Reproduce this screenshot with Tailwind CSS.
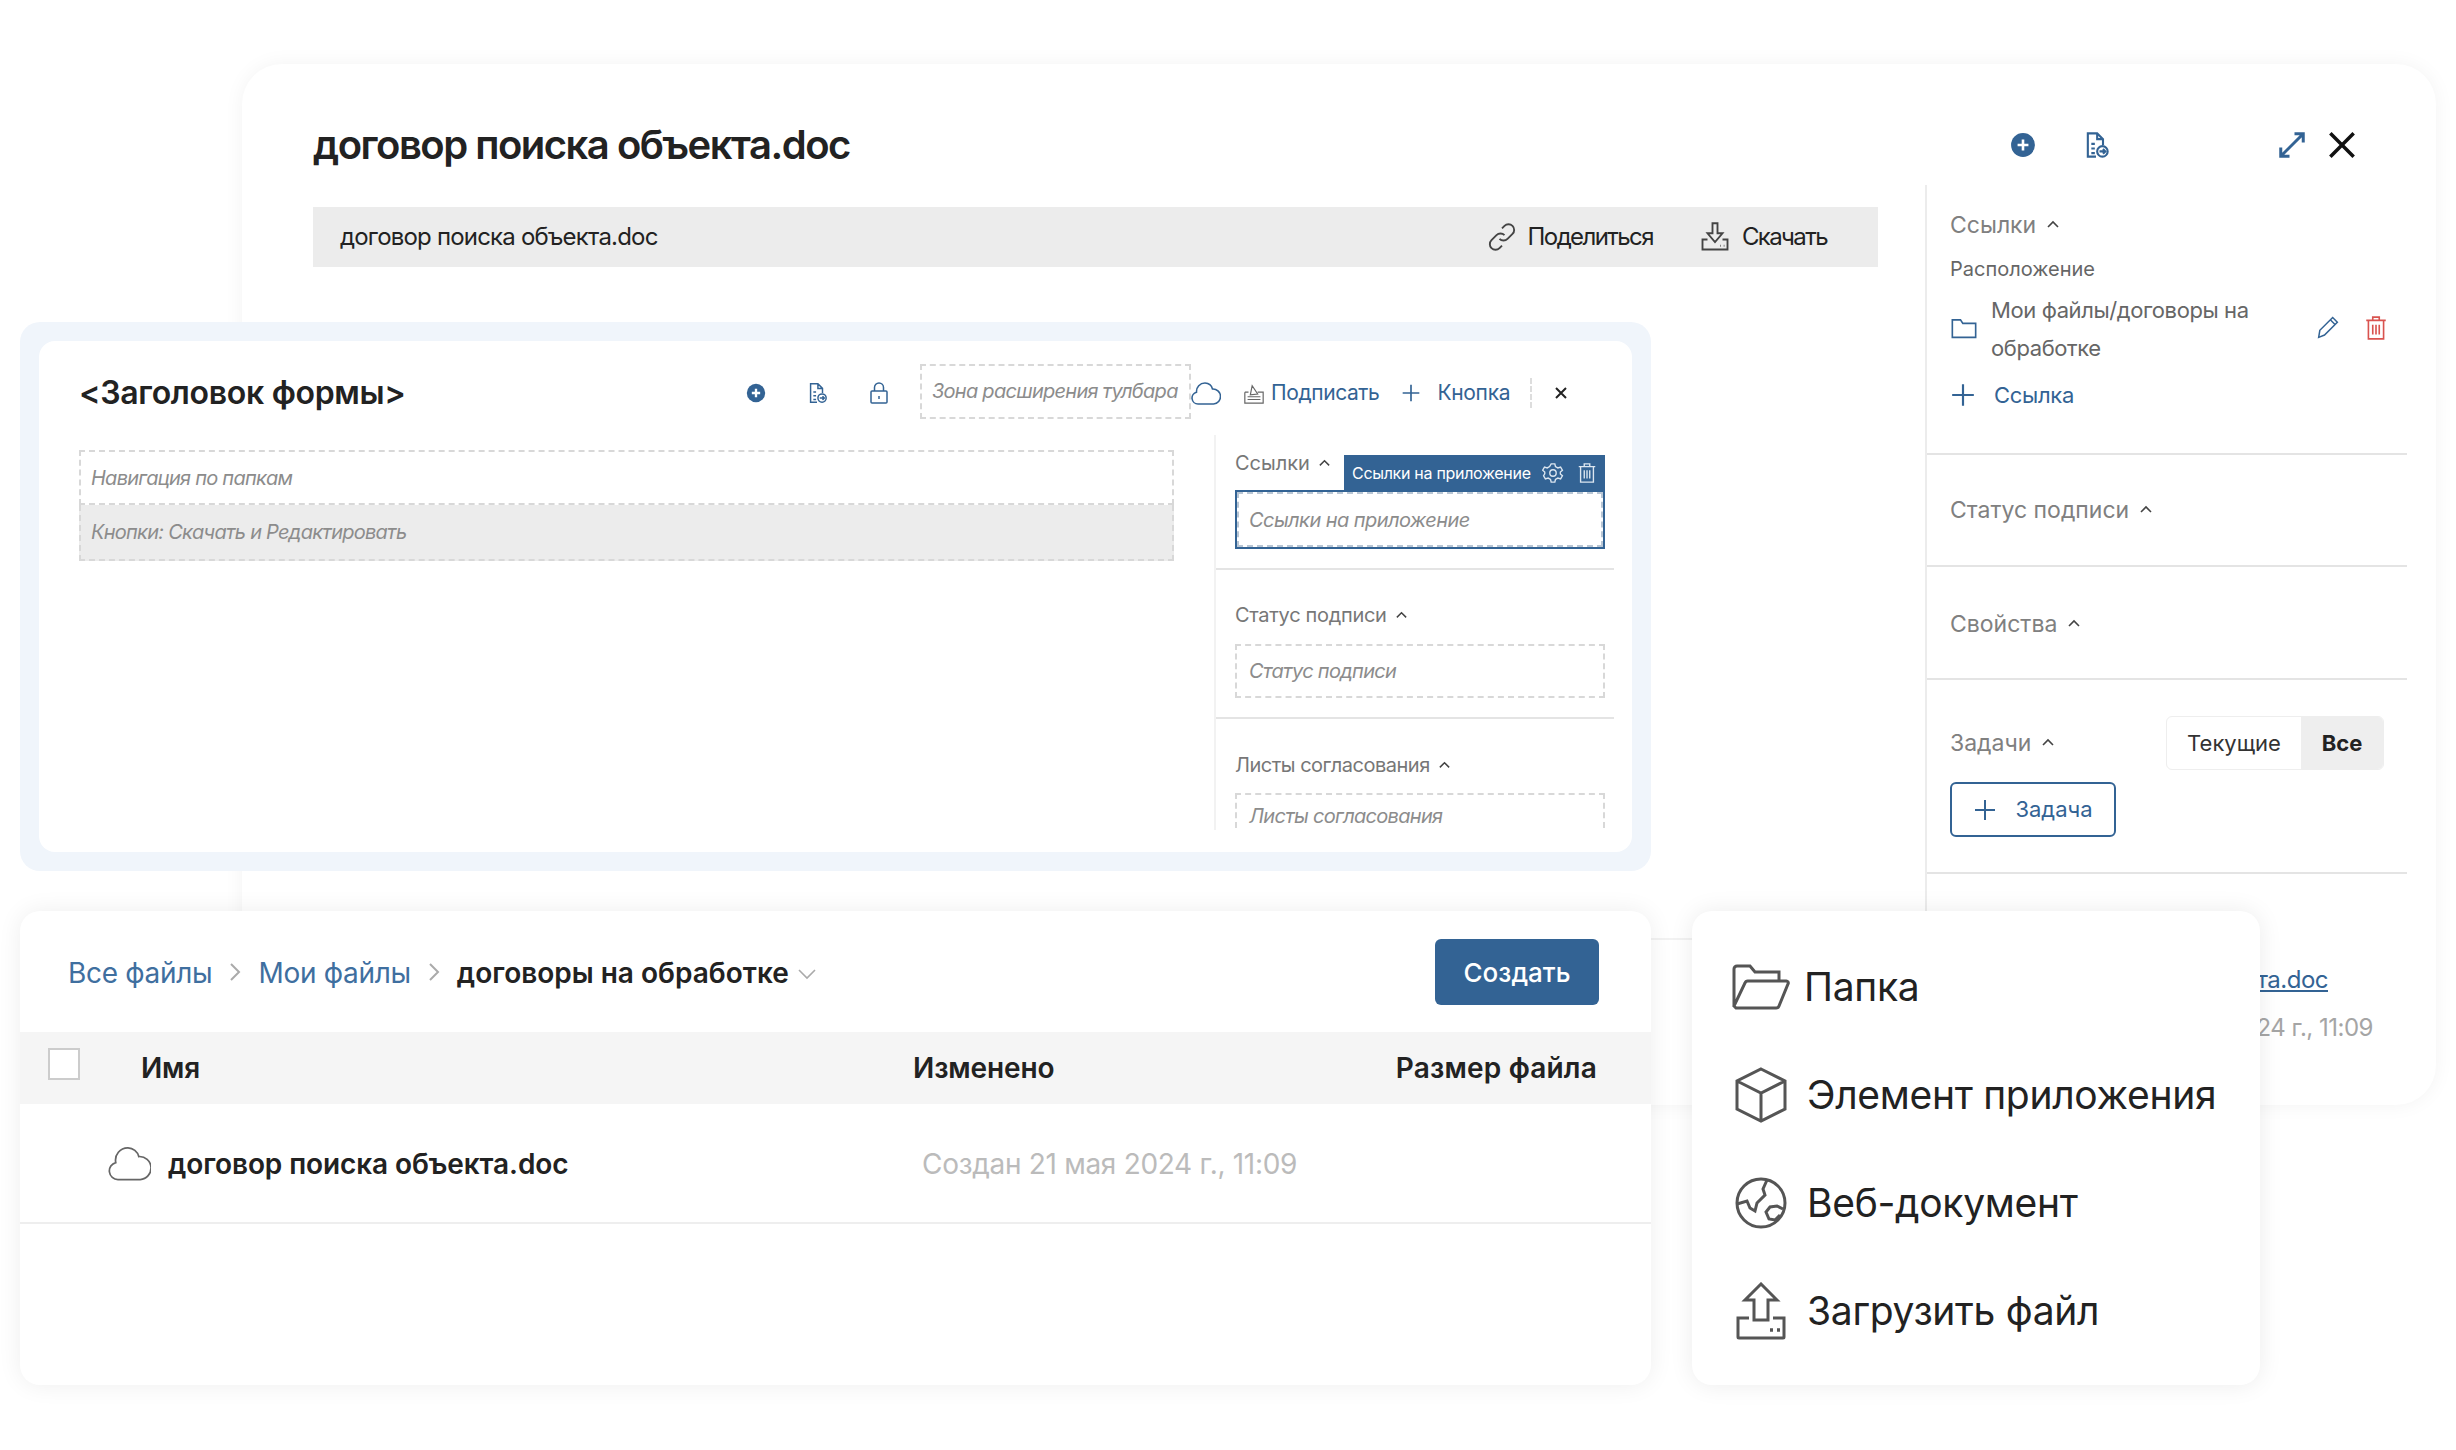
<!DOCTYPE html>
<html lang="ru">
<head>
    <meta charset="UTF-8">
    <meta name="viewport" content="width=device-width, initial-scale=1.0">
    <script src="https://cdn.jsdelivr.net/npm/@tailwindcss/browser@4"></script>
    <title>Файлы</title>
</head>
<body class="bg-white font-['Inter','Noto_Sans',sans-serif] text-[#222]">
<div class="relative w-[2456px] h-[1450px] overflow-hidden">

    <!-- задняя карточка: файл -->
    <section class="absolute left-[242px] top-[64px] w-[2194px] h-[1041px] bg-white rounded-[40px] shadow-[0_0_20px_rgba(0,0,0,0.05)] flex flex-col">
        <header class="h-[121px] shrink-0 flex items-center pt-[40px] pl-[71px]">
            <h1 class="text-[40px] font-semibold tracking-[-1.5px] w-[1680px]">договор поиска объекта.doc</h1>
            <svg class="w-[26px] h-[26px] ml-[17px]" viewBox="0 0 24 24"><circle cx="12" cy="12" r="11" fill="#336394"/><path d="M12 7v10M7 12h10" stroke="#fff" stroke-width="2.4"/></svg>
            <svg class="w-[28px] h-[28px] ml-[46px] text-[#336394]" viewBox="0 0 24 24" fill="none" stroke="currentColor" stroke-width="1.8"><path d="M12 22H5V2h8l5 5v5M13 2v5h5M8 11h3M8 15h3M8 19h3"/><circle cx="17.5" cy="17.5" r="4.5"/><path d="M15 17.5h5M18 15.5l2 2-2 2"/></svg>
            <svg class="w-[30px] h-[30px] ml-[167px] text-[#336394]" viewBox="0 0 24 24" fill="none" stroke="currentColor" stroke-width="2.4"><path d="M3 21 21 3M14 3h7v7M3 14v7h7"/></svg>
            <svg class="w-[28px] h-[28px] ml-[21px]" viewBox="0 0 24 24" fill="none" stroke="#111" stroke-width="3"><path d="M2 2l20 20M22 2 2 22"/></svg>
        </header>
        <div class="flex-1 flex min-h-0">
            <div class="w-[1683px] shrink-0 pl-[71px] pt-[22px] pr-[47px] h-[755px] border-b-2 border-[#f2f2f2]">
                <div class="h-[60px] bg-[#ececec] flex items-center justify-between pl-[27px] pr-[51px] text-[24px] tracking-[-0.8px]">
                    <span>договор поиска объекта.doc</span>
                    <div class="flex items-center gap-[47px] tracking-[-1.6px]">
                        <span class="flex items-center gap-[11px]">
                            <svg class="w-[30px] h-[30px] text-[#444]" viewBox="0 0 24 24" fill="none" stroke="currentColor" stroke-width="1.5"><path d="M10 13.500a4.500 4.500 0 0 0 6.400 0l4-4a4.500 4.500 0 0 0-6.400-6.400l-2 2"/><path d="M14 10.500a4.500 4.500 0 0 0-6.400 0l-4 4a4.500 4.500 0 0 0 6.400 6.400l2-2"/></svg>
                            Поделиться
                        </span>
                        <span class="flex items-center gap-[12px]">
                            <svg class="w-[30px] h-[30px] text-[#444]" viewBox="0 0 24 24" fill="none" stroke="currentColor" stroke-width="1.5"><path d="M10 1h4v8h4l-6 7-6-7h4zM6 14H2v8h20v-8h-4M16 19h.5M19 19h.5"/></svg>
                            Скачать
                        </span>
                    </div>
                </div>
            </div>
            <aside class="w-[482px] shrink-0 border-l-2 border-[#ececec] h-[850px]">
                <div class="h-[270px] border-b-2 border-[#e4e4e4] pl-[23px] pr-[16px] pt-[24px]">
                    <div class="flex items-center gap-[10px] text-[23px] text-[#808080] leading-[32px]">Ссылки
                        <svg class="w-[14px] h-[14px]" viewBox="0 0 14 14" fill="none" stroke="#444" stroke-width="1.6"><path d="M2 9l5-5 5 5"/></svg>
                    </div>
                    <div class="text-[20px] text-[#666] leading-[28px] mt-[14px]">Расположение</div>
                    <div class="flex items-center mt-[8px] text-[#666] text-[22px] leading-[38px] tracking-[-0.4px]">
                        <svg class="w-[28px] h-[28px] shrink-0 mr-[13px] -mt-[2px] text-[#336394]" viewBox="0 0 24 24" fill="none" stroke="currentColor" stroke-width="1.4"><path d="M2 5h7l2 3h11v12H2z"/></svg>
                        <span class="w-[300px] shrink-0">Мои файлы/договоры на обработке</span>
                        <svg class="w-[28px] h-[28px] ml-[23px] -mt-[2px] text-[#336394]" viewBox="0 0 24 24" fill="none" stroke="currentColor" stroke-width="1.3"><path d="M4 20l1-6L16 3l4 4L9 18z"/><path d="M14 5l4 4"/></svg>
                        <svg class="w-[26px] h-[26px] ml-[21px] -mt-[2px] text-[#d9534f]" viewBox="0 0 24 24" fill="none" stroke="currentColor" stroke-width="1.5"><path d="M3 5h18M9 5V2h6v3M5 5v17h14V5M9 9v9M12 9v9M15 9v9"/></svg>
                    </div>
                    <div class="flex items-center gap-[18px] mt-[12px] text-[22px] text-[#336394] leading-[32px] tracking-[-0.3px]">
                        <svg class="w-[26px] h-[26px]" viewBox="0 0 24 24" fill="none" stroke="currentColor" stroke-width="2"><path d="M12 2v20M2 12h20"/></svg>
                        Ссылка
                    </div>
                </div>
                <div class="h-[112px] border-b-2 border-[#e4e4e4] pl-[23px] pt-[39px]">
                    <div class="flex items-center gap-[10px] text-[23px] text-[#808080] leading-[32px]">Статус подписи
                        <svg class="w-[14px] h-[14px]" viewBox="0 0 14 14" fill="none" stroke="#444" stroke-width="1.6"><path d="M2 9l5-5 5 5"/></svg>
                    </div>
                </div>
                <div class="h-[113px] border-b-2 border-[#e4e4e4] pl-[23px] pt-[41px]">
                    <div class="flex items-center gap-[10px] text-[23px] text-[#808080] leading-[32px]">Свойства
                        <svg class="w-[14px] h-[14px]" viewBox="0 0 14 14" fill="none" stroke="#444" stroke-width="1.6"><path d="M2 9l5-5 5 5"/></svg>
                    </div>
                </div>
                <div class="h-[194px] border-b-2 border-[#e4e4e4] pl-[23px] pr-[23px] pt-[36px]">
                    <div class="flex items-center justify-between">
                        <div class="flex items-center gap-[10px] text-[23px] text-[#808080] leading-[32px]">Задачи
                            <svg class="w-[14px] h-[14px]" viewBox="0 0 14 14" fill="none" stroke="#444" stroke-width="1.6"><path d="M2 9l5-5 5 5"/></svg>
                        </div>
                        <div class="flex w-[218px] h-[54px] rounded-[6px] border border-[#eeeeee] text-[22px] text-[#333] overflow-hidden">
                            <span class="w-[134px] flex items-center justify-center">Текущие</span>
                            <span class="flex-1 flex items-center justify-center bg-[#eeeeee] font-bold text-[#222]">Все</span>
                        </div>
                    </div>
                    <button class="flex items-center justify-center gap-[18px] w-[166px] h-[55px] mt-[12px] rounded-[6px] border-2 border-[#336394] text-[22px] text-[#336394]">
                        <svg class="w-[24px] h-[24px]" viewBox="0 0 24 24" fill="none" stroke="currentColor" stroke-width="2"><path d="M12 2v20M2 12h20"/></svg>
                        Задача
                    </button>
                </div>
                <div class="pt-[82px] text-right text-[24px] leading-[48px] tracking-[-0.5px]">
                    <a class="block mr-[79px] text-[#336394] underline">договор поиска объекта.doc</a>
                    <div class="mr-[34px] text-[#a5a5a5]">Создан 21 мая 2024 г., 11:09</div>
                </div>
            </aside>
        </div>
    </section>

    <!-- форма -->
    <section class="absolute left-[20px] top-[322px] w-[1631px] h-[549px] rounded-[20px] bg-[#f0f5fb] p-[19px]">
        <div class="h-full rounded-[16px] bg-white pl-[40px] pr-[18px] flex flex-col">
            <div class="h-[100px] shrink-0 flex items-center pt-[4px]">
                <h2 class="text-[32px] font-semibold tracking-[-0.3px] w-[667px] shrink-0">&lt;Заголовок формы&gt;</h2>
                <svg class="w-[20px] h-[20px]" viewBox="0 0 24 24"><circle cx="12" cy="12" r="11" fill="#336394"/><path d="M12 7v10M7 12h10" stroke="#fff" stroke-width="2.800"/></svg>
                <svg class="w-[22px] h-[22px] ml-[40px] text-[#336394]" viewBox="0 0 24 24" fill="none" stroke="currentColor" stroke-width="1.6"><path d="M12 22H5V2h8l5 5v5M13 2v5h5M8 11h3M8 15h3M8 19h3"/><circle cx="17.5" cy="17.5" r="4.5"/><path d="M15 17.5h5M18 15.5l2 2-2 2"/></svg>
                <svg class="w-[24px] h-[24px] ml-[39px] text-[#336394]" viewBox="0 0 24 24" fill="none" stroke="currentColor" stroke-width="1.5"><rect x="4" y="10" width="16" height="12" rx="1"/><path d="M7.500 10V6.500a4.500 4.500 0 0 1 9 0V10M12 15v3"/></svg>
                <div class="w-[271px] h-[55px] ml-[29px] -mt-[4px] shrink-0 border-2 border-dashed border-[#d8d8d8] flex items-center pl-[10px] text-[20px] italic tracking-[-0.75px] text-[#8c8c8c] whitespace-nowrap">Зона расширения тулбара</div>
                <svg class="w-[32px] h-[28px] -ml-[2px] shrink-0 text-[#336394]" viewBox="0 0 32 26" fill="none" stroke="currentColor" stroke-width="1.600"><path d="M9 24a6 6 0 0 1-1.500-11.800A8.500 8.500 0 0 1 16 3a8 8 0 0 1 7.500 6 7.500 7.500 0 0 1 1 15z"/></svg>
                <svg class="w-[22px] h-[22px] ml-[22px] mt-[2px] shrink-0 text-[#666]" viewBox="0 0 24 24" fill="none" stroke="currentColor" stroke-width="1.3"><path d="M2 10h4M16 10h6v12H2V10M5 15h14M5 18h14M8 13 10 3l6 9z"/></svg>
                <span class="ml-[6px] text-[21px] text-[#336394] tracking-[-0.4px] whitespace-nowrap">Подписать</span>
                <svg class="w-[20px] h-[20px] ml-[22px] shrink-0 text-[#336394]" viewBox="0 0 24 24" fill="none" stroke="currentColor" stroke-width="2"><path d="M12 2v20M2 12h20"/></svg>
                <span class="ml-[16px] text-[21px] text-[#336394] tracking-[-0.3px]">Кнопка</span>
                <span class="ml-[20px] h-[30px] border-l-2 border-dashed border-[#dddddd]"></span>
                <svg class="w-[14px] h-[14px] ml-[22px] shrink-0" viewBox="0 0 14 14" fill="none" stroke="#222" stroke-width="2"><path d="M2 2l10 10M12 2 2 12"/></svg>
            </div>
            <div class="flex-1 flex min-h-0">
                <div class="w-[1095px] shrink-0 pt-[9px] text-[20px] italic tracking-[-0.75px] text-[#8c8c8c]">
                    <div class="h-[55px] border-2 border-dashed border-[#d8d8d8] flex items-center pl-[10px]">Навигация по папкам</div>
                    <div class="h-[56px] border-2 border-dashed border-[#d8d8d8] border-t-0 bg-[#ececec] flex items-center pl-[10px]">Кнопки: Скачать и Редактировать</div>
                </div>
                <aside class="ml-[40px] -mt-[6px] flex-1 border-l-2 border-[#f2f2f2] h-[395px] overflow-hidden">
                    <div class="h-[135px] border-b-2 border-[#e4e4e4] pl-[19px] pr-[9px] pt-[20px]">
                        <div class="flex items-start">
                            <div class="flex items-center gap-[8px] -mt-[6px] text-[20px] text-[#777] leading-[28px] w-[109px] shrink-0">Ссылки
                                <svg class="w-[13px] h-[13px]" viewBox="0 0 14 14" fill="none" stroke="#444" stroke-width="1.6"><path d="M2 9l5-5 5 5"/></svg>
                            </div>
                            <div class="flex-1 h-[35px] bg-[#336394] flex items-center text-white text-[16px] tracking-[-0.3px] pl-[8px] pr-[7px]">
                                <span class="flex-1 whitespace-nowrap">Ссылки на приложение</span>
                                <svg class="w-[22px] h-[22px] text-[#dce6f0]" viewBox="0 0 24 24" fill="none" stroke="currentColor" stroke-width="1.500"><circle cx="12" cy="12" r="3.500"/><path d="M10 2h4l.7 3 2.600 1.500 3-1 2 3.500-2.300 2v2l2.300 2-2 3.500-3-1-2.600 1.500-.7 3h-4l-.7-3-2.600-1.500-3 1-2-3.500L3 13v-2L.7 9l2-3.500 3 1L8.300 5z"/></svg>
                                <svg class="w-[22px] h-[22px] ml-[12px] text-[#dce6f0]" viewBox="0 0 24 24" fill="none" stroke="currentColor" stroke-width="1.500"><path d="M3 5h18M9 5V2h6v3M5 5v17h14V5M9 9v9M12 9v9M15 9v9"/></svg>
                            </div>
                        </div>
                        <div class="h-[59px] relative border-2 border-[#336394] outline-2 outline-dashed -outline-offset-4 outline-[#b9c6d4] bg-white flex items-center pl-[12px] text-[20px] italic tracking-[-0.55px] text-[#8c8c8c]">Ссылки на приложение</div>
                    </div>
                    <div class="h-[149px] border-b-2 border-[#e4e4e4] pl-[19px] pr-[9px] pt-[31px]">
                        <div class="flex items-center gap-[8px] text-[20px] tracking-[-0.3px] text-[#777] leading-[28px]">Статус подписи
                            <svg class="w-[13px] h-[13px]" viewBox="0 0 14 14" fill="none" stroke="#444" stroke-width="1.6"><path d="M2 9l5-5 5 5"/></svg>
                        </div>
                        <div class="h-[54px] mt-[15px] border-2 border-dashed border-[#d8d8d8] flex items-center pl-[12px] text-[20px] italic tracking-[-0.7px] text-[#8c8c8c]">Статус подписи</div>
                    </div>
                    <div class="pl-[19px] pr-[9px] pt-[32px]">
                        <div class="flex items-center gap-[8px] text-[20px] tracking-[-0.5px] text-[#777] leading-[28px]">Листы согласования
                            <svg class="w-[13px] h-[13px]" viewBox="0 0 14 14" fill="none" stroke="#444" stroke-width="1.6"><path d="M2 9l5-5 5 5"/></svg>
                        </div>
                        <div class="h-[35px] mt-[14px] border-2 border-b-0 border-dashed border-[#d8d8d8] pt-[10px] pl-[12px] text-[20px] leading-[23px] italic tracking-[-0.7px] text-[#8c8c8c]">Листы согласования</div>
                    </div>
                </aside>
            </div>
        </div>
    </section>

    <!-- список файлов -->
    <section class="absolute left-[20px] top-[911px] w-[1631px] h-[474px] rounded-[20px] bg-white shadow-[0_0_24px_rgba(0,0,0,0.07)] overflow-hidden">
        <div class="h-[121px] flex items-center pl-[48px] pr-[52px] text-[28px] tracking-[-0.3px]">
            <a class="text-[#3f6f9f] mt-[2px]">Все файлы</a>
            <svg class="w-[16px] h-[22px] mx-[15px]" viewBox="0 0 16 22" fill="none" stroke="#aaa" stroke-width="2"><path d="M4 3l8 8-8 8"/></svg>
            <a class="text-[#3f6f9f] mt-[2px]">Мои файлы</a>
            <svg class="w-[16px] h-[22px] mx-[15px]" viewBox="0 0 16 22" fill="none" stroke="#aaa" stroke-width="2"><path d="M4 3l8 8-8 8"/></svg>
            <b class="font-semibold tracking-normal mt-[2px]">договоры на обработке</b>
            <svg class="w-[20px] h-[14px] ml-[8px] mt-[4px]" viewBox="0 0 20 14" fill="none" stroke="#aaa" stroke-width="1.6"><path d="M2 3l8 8 8-8"/></svg>
            <button class="ml-auto w-[164px] h-[66px] pt-[2px] rounded-[6px] bg-[#336394] text-white text-[26px] font-medium tracking-normal">Создать</button>
        </div>
        <div class="h-[72px] bg-[#f5f5f5] flex items-center relative text-[28px] font-semibold">
            <span class="w-[32px] h-[32px] ml-[28px] -mt-[8px] bg-white border-2 border-[#cccccc]"></span>
            <span class="ml-[61px] w-[772px] shrink-0 tracking-[-0.2px]">Имя</span>
            <span class="tracking-[-0.1px]">Изменено</span>
            <span class="ml-auto mr-[54px] tracking-[0.2px]">Размер файла</span>
        </div>
        <div class="h-[120px] flex items-center border-b-2 border-[#eeeeee]">
            <svg class="w-[46px] h-[36px] ml-[85px] text-[#666]" viewBox="0 0 32 25" fill="none" stroke="currentColor" stroke-width="1.200"><path d="M9 24a6 6 0 0 1-1.500-11.800A8.500 8.500 0 0 1 16 2a8 8 0 0 1 7.500 6 7.500 7.500 0 0 1 1 16z"/></svg>
            <span class="ml-[17px] w-[754px] shrink-0 mt-[2px] text-[28px] font-semibold tracking-[-0.1px]">договор поиска объекта.doc</span>
            <span class="mt-[2px] text-[28px] text-[#bbbbbb] tracking-[-0.3px]">Создан 21 мая 2024 г., 11:09</span>
        </div>
    </section>

    <!-- меню Создать -->
    <section class="absolute left-[1692px] top-[911px] w-[568px] h-[474px] rounded-[20px] bg-white shadow-[0_0_24px_rgba(0,0,0,0.08)] pl-[40px] pt-[22px] text-[39px] tracking-[-0.3px] text-[#222]">
        <div class="h-[108px] flex items-center gap-[14px]">
            <svg class="w-[58px] h-[46px] text-[#555]" viewBox="0 0 58 46" fill="none" stroke="currentColor" stroke-width="3"><path d="M2 42V5a3 3 0 0 1 3-3h13l5 6h24v8M2 42l11-23a3 3 0 0 1 3-2h38a2 2 0 0 1 2 3L47 42a3 3 0 0 1-3 2H4z"/></svg>
            <span>Папка</span>
        </div>
        <div class="h-[108px] flex items-center gap-[20px] pl-[3px]">
            <svg class="w-[52px] h-[56px] text-[#555]" viewBox="0 0 52 56" fill="none" stroke="currentColor" stroke-width="3"><path d="M26 2 50 14v28L26 54 2 42V14zM2 14l24 12 24-12M26 26v28"/></svg>
            <span>Элемент приложения</span>
        </div>
        <div class="h-[108px] flex items-center gap-[20px] pl-[3px]">
            <svg class="w-[52px] h-[52px] text-[#555]" viewBox="0 0 52 52" fill="none" stroke="currentColor" stroke-width="3"><circle cx="26" cy="26" r="24"/><path d="M32 3l-4 9 2 6-8 8-2 8-5-3-3-7-10 3M48 32l-6-3-7 1-4 5 3 7 6 1 5-5"/></svg>
            <span>Веб-документ</span>
        </div>
        <div class="h-[108px] flex items-center gap-[20px] pl-[3px]">
            <svg class="w-[52px] h-[58px] text-[#555]" viewBox="0 0 52 58" fill="none" stroke="currentColor" stroke-width="3"><path d="M26 2 10 18h9v20h14V18h9zM14 36H3v19a1 1 0 0 0 1 1h44a1 1 0 0 0 1-1V36H38"/><path d="M35 48h3M42 48h3" stroke-width="3.500"/></svg>
            <span>Загрузить файл</span>
        </div>
    </section>
</div>
</body>
</html>
